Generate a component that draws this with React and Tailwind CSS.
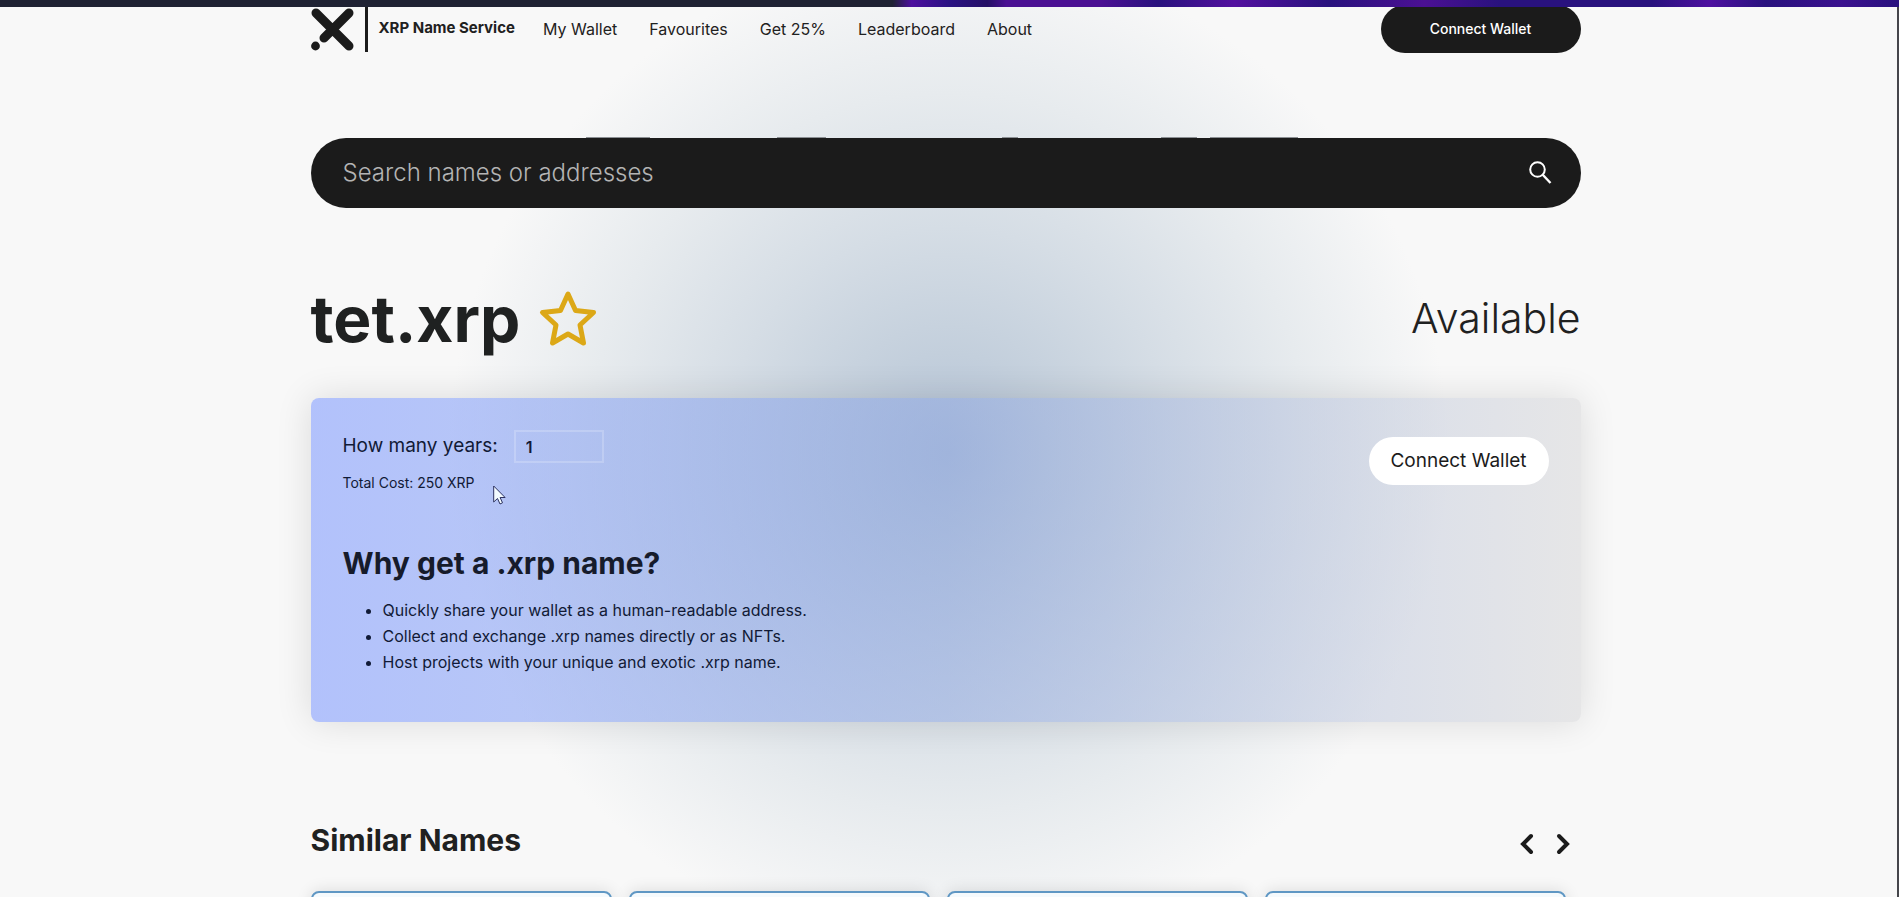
import { useState } from 'react';

const navLinks = ['My Wallet', 'Favourites', 'Get 25%', 'Leaderboard', 'About'];

const reasons = [
    'Quickly share your wallet as a human-readable address.',
    'Collect and exchange .xrp names directly or as NFTs.',
    'Host projects with your unique and exotic .xrp name.',
];

const similarNames = [1, 2, 3, 4];

function Logo() {
    return (
        <svg width="58" height="46" viewBox="0 0 58 46" fill="none" stroke="#1b1b1b" aria-hidden="true">
            <path d="M5 7 38 40M38 7 13 32" strokeWidth="9" strokeLinecap="round" />
            <circle cx="4.500" cy="40" r="4.400" fill="#1b1b1b" stroke="none" />
            <path d="M55.500 1V46" strokeWidth="3" />
        </svg>
    );
}

function Header() {
    return (
        <header className="flex items-center justify-between h-[43px]">
            <div className="flex items-center">
                <a href="#home" className="flex items-center gap-2.5 text-[15px] font-bold">
                    <Logo />
                    <span>XRP Name Service</span>
                </a>
                <nav className="flex items-center gap-8 ml-7">
                    {navLinks.map((link) => (
                        <a key={link} href="#nav" className="text-base">{link}</a>
                    ))}
                </nav>
            </div>
            <button className="w-[200px] h-12 rounded-full bg-[#1b1b1b] text-white text-sm font-medium">
                Connect Wallet
            </button>
        </header>
    );
}

function SearchBar() {
    return (
        <form className="relative flex items-center h-[70px] mt-[88px] px-8 rounded-full bg-[#1b1b1b]" onSubmit={(e) => e.preventDefault()}>
            <svg className="absolute left-0 -top-px w-full h-px" viewBox="0 0 1270 1" preserveAspectRatio="none" fill="#8b8f93" aria-hidden="true">
                <path d="M275 0h64v1h-64zM466 0h49v1h-49zM691 0h16v1h-16zM850 0h36v1h-36zM899 0h88v1h-88z" />
            </svg>
            <input
                type="text"
                aria-label="Search names or addresses"
                placeholder="Search names or addresses"
                className="flex-1 bg-transparent text-2xl font-light text-white placeholder:text-[#b4b4b4] outline-none"
            />
            <button type="submit" aria-label="Search" className="-mr-1">
                <svg width="24" height="24" viewBox="0 0 24 24" fill="none" stroke="#fff" strokeWidth="2">
                    <circle cx="8.500" cy="8.500" r="7.300" />
                    <path d="M13.500 13.500 21.500 22" strokeWidth="2.400" />
                </svg>
            </button>
        </form>
    );
}

function Cursor() {
    return (
        <svg className="absolute left-[182px] top-[87px]" width="13" height="20" viewBox="0 0 13 20" fill="#f3fbff" stroke="#2c3260" aria-hidden="true">
            <path d="M.7 1v16l3.800-3.500 2.500 5.500 2.500-1.200-2.400-5.300h5z" />
        </svg>
    );
}

function RegisterCard() {
    const [years, setYears] = useState('1');

    return (
        <section className="relative mt-[34px] h-[324px] rounded-lg p-8 bg-linear-to-r from-[#6c8bff]/50 via-[#8ca5e1]/50 to-[#d4d4d6]/50 shadow-[0_0_36px_rgba(0,0,0,0.12)] text-[#111a36]">
            <div className="flex items-start justify-between">
                <div>
                    <div className="flex items-center gap-4">
                        <label htmlFor="years" className="text-[19px]">How many years:</label>
                        <input
                            id="years"
                            type="text"
                            inputMode="numeric"
                            value={years}
                            onChange={(e) => setYears(e.target.value)}
                            className="w-[90px] h-[33px] px-2.5 border-2 border-white/20 text-base font-semibold outline-none"
                        />
                    </div>
                    <p className="mt-2 text-sm leading-6">Total Cost: 250 XRP</p>
                </div>
                <button className="mt-[7px] w-[180px] h-12 rounded-full bg-white text-[#1b1b1b] text-[19px]">
                    Connect Wallet
                </button>
            </div>
            <h2 className="mt-12 text-[30px] leading-10 font-bold text-[#161b2b]">Why get a .xrp name?</h2>
            <ul className="mt-3.5 pl-10 list-disc text-base leading-[26px]">
                {reasons.map((reason) => (
                    <li key={reason}>{reason}</li>
                ))}
            </ul>
            <Cursor />
        </section>
    );
}

function SimilarNames() {
    return (
        <section className="mt-24">
            <div className="flex items-center justify-between h-11">
                <h2 className="text-[30px] font-bold">Similar Names</h2>
                <div className="flex gap-3 pr-1.5 pt-2">
                    <button aria-label="Previous">
                        <svg width="24" height="24" viewBox="0 0 24 24" fill="none" stroke="#1b1b1b" strokeWidth="4">
                            <path d="M16 4 8 12 16 20" strokeLinecap="round" />
                        </svg>
                    </button>
                    <button aria-label="Next">
                        <svg width="24" height="24" viewBox="0 0 24 24" fill="none" stroke="#1b1b1b" strokeWidth="4">
                            <path d="M8 4 16 12 8 20" strokeLinecap="round" />
                        </svg>
                    </button>
                </div>
            </div>
            <div className="grid grid-cols-4 mt-[29px] -mr-0.5">
                {similarNames.map((id) => (
                    <div key={id} className="mr-[17px] h-40 rounded-lg border-2 border-[#5f97c4] bg-[#f5fafd] shadow-[0_0_16px_rgba(0,0,0,0.12)]" />
                ))}
            </div>
        </section>
    );
}

export default function App() {
    return (
        <div className="h-screen overflow-hidden flex flex-col bg-[#f8f8f8] text-[#1f2121] font-['Inter','Liberation_Sans',sans-serif]">
            <div className="relative z-10 h-[7px] shrink-0 bg-[linear-gradient(90deg,#1f2233_47%,#4d0f9e_48%,#2a1283_50%,#251066_52%,#4b1093_53%,#4b1093_58%,#29127e_61%,#53109f_65%,#29127e_70%,#4b1093_75%,#29127e_79%,#29127e_87%,#4e10a0_90%,#29127e_93%,#3b118f_97%,#29127e_100%)]" />
            <div className="flex-1 border-r-2 border-[#45464b] pr-1.5 bg-[radial-gradient(circle_500px_at_50%_446px,#b4c3d7_0%,#c3cfdc_20%,#d5dde5_45%,#e7ebee_72%,#f8f8f8_100%)]">
                <main className="max-w-[1270px] mx-auto">
                    <Header />
                    <SearchBar />
                    <div className="flex items-center justify-between mt-[66px] h-[90px]">
                        <div className="flex items-center gap-4">
                            <h1 className="text-[64px] font-bold">tet.xrp</h1>
                            <button aria-label="Add to favourites">
                                <svg width="64" height="64" viewBox="0 0 64 64" fill="none" stroke="#dca817" strokeWidth="5" strokeLinejoin="round">
                                    <path d="M32 7 39.500 23.500 57.500 25.500 44 38 47.500 56 32 47 16.500 56 20 38 6.500 25.500 24.500 23.500Z" />
                                </svg>
                            </button>
                        </div>
                        <p className="text-[41px] font-light">Available</p>
                    </div>
                    <RegisterCard />
                    <SimilarNames />
                </main>
            </div>
        </div>
    );
}
